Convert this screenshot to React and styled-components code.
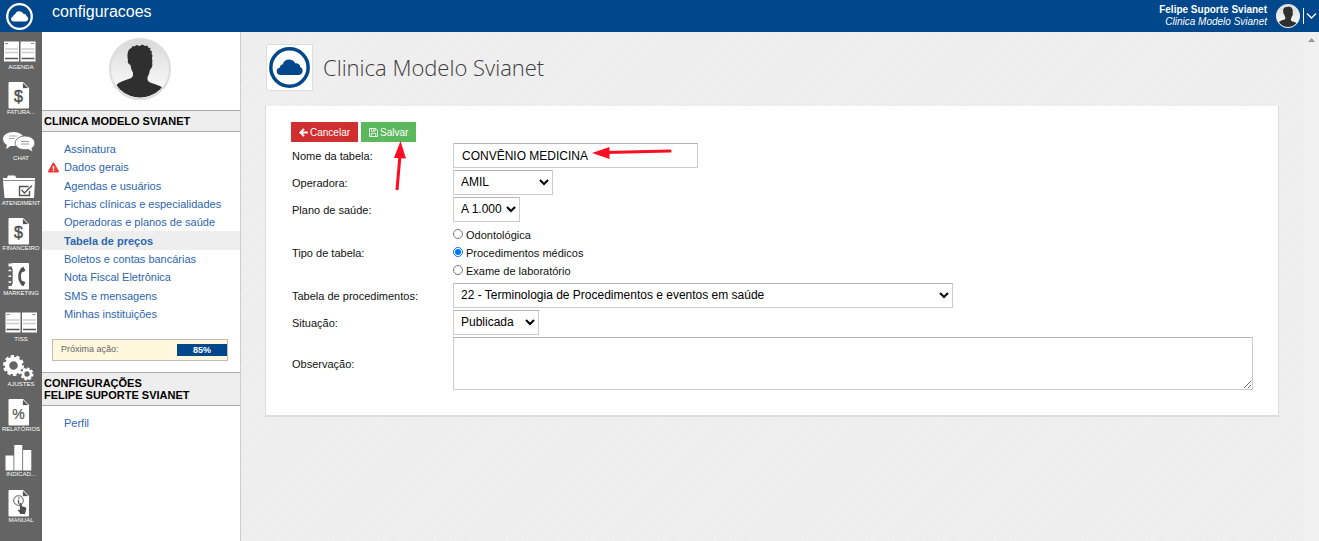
import React, { useState } from "react";
import styled, { createGlobalStyle, css } from "styled-components";
import { FaExclamationTriangle } from "react-icons/fa";

const GlobalStyle = createGlobalStyle`
  * {
    box-sizing: border-box;
  }

  body {
    margin: 0;
    background: #eee;
    color: #111;
    font-family: "Liberation Sans", Arial, sans-serif;
    font-size: 11px;
  }
`;

const Page = styled.div`
  display: flex;
  flex-direction: column;
  min-height: 100vh;
`;

const TopBar = styled.header`
  display: flex;
  align-items: center;
  height: 32px;
  padding: 0 2px 0 6px;
  background: #00478b;
  color: #fff;
`;

const HomeLink = styled.a`
  display: flex;
  width: 46px;
`;

const PageName = styled.h1`
  flex: 1;
  margin: 0;
  padding-bottom: 8px;
  font-size: 16px;
  font-weight: normal;
  line-height: 24px;
`;

const UserInfo = styled.div`
  margin-right: 9px;
  font-size: 10px;
  line-height: 12px;
  text-align: right;
`;

const UserName = styled.div`
  font-weight: bold;
`;

const ClinicName = styled.div`
  font-style: italic;
`;

const UserMenu = styled.button`
  display: flex;
  align-items: center;
  padding: 0;
  border: none;
  background: none;
  cursor: pointer;
`;

const Divider = styled.span`
  width: 1px;
  height: 16px;
  margin: 0 2px 0 3px;
  background: #fff;
`;

const Body = styled.div`
  display: flex;
  flex: 1;
`;

const Rail = styled.nav`
  flex: none;
  width: 42px;
  padding-top: 1px;
  background: #646464;
`;

const RailList = styled.div`
  display: grid;
  grid-auto-rows: 1fr;
  min-height: 498px;
`;

const RailItem = styled.a`
  display: flex;
  flex-direction: column;
  align-items: center;
  color: #fff;
  font-size: 6px;
  line-height: 9px;
  text-decoration: none;
  white-space: nowrap;

  svg {
    flex: none;
  }
`;

const Sidebar = styled.aside`
  flex: none;
  width: 199px;
  border-right: 1px solid #ccc;
  background: #fff;
`;

const AvatarBox = styled.div`
  display: flex;
  justify-content: center;
  padding: 6px 2px 10px 0;
`;

const SectionTitle = styled.h2`
  margin: 0;
  padding: 4px 2px;
  border-top: 1px solid #aaa;
  border-bottom: 1px solid #aaa;
  background: #eee;
  color: #000;
  font-size: 11px;
  line-height: 12px;
`;

const Menu = styled.nav`
  display: grid;
  grid-auto-rows: 1fr;
  min-height: ${(props) => props.$height};
  margin: 8px 0 16px;
`;

const MenuLink = styled.a`
  display: flex;
  align-items: center;
  padding-left: 6px;
  color: #2c66ae;
  text-decoration: none;

  ${(props) =>
    props.$active &&
    css`
      background: #eee;
      font-weight: bold;
    `}
`;

const MenuMark = styled.span`
  display: flex;
  width: 16px;
  color: #f23a35;
`;

const NextAction = styled.div`
  display: flex;
  justify-content: space-between;
  height: 22px;
  margin: 0 12px 11px 10px;
  padding: 4px 0 4px 8px;
  border: 1px solid #bbb;
  background: #fff8df;
  color: #666;
  font-size: 9px;
`;

const Progress = styled.span`
  width: 50px;
  background: #00478b;
  color: #fff;
  font-weight: bold;
  line-height: 13px;
  text-align: center;
`;

const Main = styled.main`
  flex: 1;
  min-width: 0;
  padding: 12px 25px 24px 24px;
  background: repeating-linear-gradient(
    135deg,
    #ededed 0,
    #ededed 2px,
    #f1f1f1 2px,
    #f1f1f1 3px
  );
`;

const ScrollTrack = styled.div`
  flex: none;
  display: flex;
  justify-content: center;
  width: 15px;
  padding-top: 5px;
  background: #f0f0f0;
`;

const Brand = styled.div`
  display: flex;
  align-items: center;
  gap: 10px;
  margin-bottom: 15px;
`;

const BrandLogo = styled.div`
  display: flex;
  margin-left: 1px;
  padding: 2px;
  border: 1px solid #ddd;
  border-radius: 2px;
  background: #fff;
`;

const BrandName = styled.h2`
  margin: 0;
  padding-bottom: 2px;
  color: #3c3c3c;
  font-family: "Open Sans", "Noto Sans", sans-serif;
  font-size: 22px;
  font-weight: 300;
`;

const Card = styled.form`
  padding: 16px 25px 25px;
  border: solid #ddd;
  border-width: 0 1px 2px;
  background: #fff;
`;

const Actions = styled.div`
  display: flex;
  gap: 3px;
  margin-bottom: 1px;
`;

const ActionButton = styled.button`
  display: flex;
  align-items: center;
  justify-content: center;
  gap: 2px;
  height: 20px;
  padding: 0 8px;
  border: none;
  background: ${(props) => (props.$danger ? "#d12f2f" : "#5cb85c")};
  color: #fff;
  font-family: inherit;
  font-size: 10px;
  cursor: pointer;
`;

const Fields = styled.div`
  display: grid;
  grid-template-columns: 160px 1fr;
  gap: 2px;
  align-items: center;
  justify-items: start;
`;

const FieldLabel = styled.label`
  padding: 1px 0 0 1px;
`;

const control = css`
  height: 25px;
  border: 1px solid #ccc;
  border-top-color: #b5b5b5;
  border-radius: 0;
  background: #fff;
  color: #000;
  font-family: inherit;
  font-size: 12px;
`;

const TextInput = styled.input`
  ${control}
  width: 245px;
  padding: 0 8px;
`;

const Select = styled.select`
  ${control}
  width: ${(props) => props.$width};
  max-width: 100%;
  padding: 0 0 2px 3px;
`;

const Notes = styled.textarea`
  ${control}
  display: block;
  width: 100%;
  height: 53px;
`;

const RadioGroup = styled.div`
  padding: 2px 0 1px;
`;

const RadioLabel = styled.label`
  display: flex;
  align-items: center;
  gap: 3px;
  height: 18px;
`;

const Radio = styled.input`
  width: 10px;
  height: 10px;
  margin: 0 0 2px;
`;

const Anchor = styled.div`
  position: relative;
`;

const Pointer = styled.svg`
  position: absolute;
  left: ${(props) => props.$left};
  top: ${(props) => props.$top};
  pointer-events: none;
`;

const Logo = ({ size, ring, fill }) => (
  <svg width={size} height={size} viewBox="0 0 40 40">
    <circle cx="20" cy="20" r="18.2" fill={fill} stroke={ring} strokeWidth="3.4" />
    <path
      fill={ring}
      d="M11.5 27.3C8.8 27.3 7.5 25.5 7.5 23.6c0-2 1.3-3.4 3.2-3.7 0-1.5 1-2.6 2.5-2.8 1-3.1 3.5-4.9 6.4-4.9 2.9 0 5 1.5 6.1 3.8 2.7-.3 4.7 1.3 4.7 3.6 1.5.5 2.4 2 2.4 3.6 0 2.3-1.6 4.1-4 4.1z"
    />
  </svg>
);

const Avatar = ({ size, ring, id }) => (
  <svg width={size} height={size} viewBox="0 0 62 62">
    <defs>
      <linearGradient id={id} x1="0" y1="0" x2="0" y2="1">
        <stop offset="0" stopColor="#d9d9d9" />
        <stop offset="1" stopColor="#fff" />
      </linearGradient>
      <clipPath id={`${id}-clip`}>
        <circle cx="31" cy="31" r="28.5" />
      </clipPath>
    </defs>
    <circle cx="31" cy="31" r="30" fill={`url(#${id})`} stroke={ring} strokeWidth="2" />
    <path
      clipPath={`url(#${id}-clip)`}
      fill="#2f2f2f"
      d="M19 22c-1-4-.5-9 1.500-11l2-1 1-2 2 .5 2-1.500 3 1 3-1.500 2.500 1.500 2.500-.5.5 2 2.500.5-.5 2 2 1.500-.5 2 1 2-.5 3 .5 3-.5 1c1 2 0 6-2 7-.5 3-1 5-2.500 7.500v3c1 2 3 2.800 5.500 3.500 5 1.500 9 3 11.500 5.500l-1 3C50 56.500 42 60 31 60S12 56.500 7 50l1-3.500c2.500-2.500 6.500-4 11.500-5.500 2.500-.7 4-1.500 4.500-3.500v-3c-1.500-2-2-4.500-2.500-7.500-2-1-3.500-2.500-2.500-5z"
    />
  </svg>
);

const ArrowLeftIcon = () => (
  <svg width="9" height="9" viewBox="0 0 9 9">
    <path d="M8.800 4.500H2M5 .9L1.400 4.500L5 8.100" fill="none" stroke="#fff" strokeWidth="1.900" />
  </svg>
);

const SaveIcon = () => (
  <svg width="9" height="9" viewBox="0 0 9 9">
    <path d="M.5.5h6.200l1.800 1.800v6.200h-8z" fill="none" stroke="#fff" strokeWidth=".9" />
    <path d="M2.300.5v2.700h3.900V.5M2.300 8.500V5.300h4.400v3.200M4.900 1v1.700" fill="none" stroke="#fff" strokeWidth=".8" />
  </svg>
);

const Book = () => (
  <>
    <path fill="#fff" d="M4 8.500h15v20H4zM20.500 8.500h15v20h-15z" />
    <path stroke="#888" d="M5 10.500h3M31 10.500h3" />
    <path stroke="#ccc" strokeWidth="1.400" d="M5 16h13M21.500 16h13M5 19.500h13M21.500 19.500h13" />
    <path stroke="#555" strokeWidth="1.400" d="M5 25.500h13M21.500 25.500h13" />
  </>
);

const Sheet = ({ children, sign }) => (
  <>
    <path fill="#fff" d="M9.500 4H23l6 6.500V29.500q0 1-1 1H9.500q-1 0-1-1V5q0-1 1-1z" />
    <path fill="#555" stroke="#fff" strokeWidth=".8" d="M22.500 4v6.500H29z" />
    {sign && (
      <text
        x="18.5"
        y="24"
        textAnchor="middle"
        fill="#505050"
        stroke="#505050"
        strokeWidth={sign === "$" ? 0.5 : 0.2}
        fontSize={sign === "$" ? 16 : 14}
      >
        {sign}
      </text>
    )}
    {children}
  </>
);

const Gear = ({ cx, cy, r, teeth }) => (
  <g fill="none" stroke="#fff">
    <circle cx={cx} cy={cy} r={r * 0.62} strokeWidth={r * 0.42} />
    <circle
      cx={cx}
      cy={cy}
      r={r * 0.88}
      strokeWidth={r * 0.24}
      pathLength={teeth * 2}
      strokeDasharray="1.200 .8"
    />
  </g>
);

const icons = {
  book: <Book />,
  guide: (
    <g transform="translate(1.500 -1)">
      <Book />
    </g>
  ),
  money: <Sheet sign="$" />,
  percent: <Sheet sign="%" />,
  chat: (
    <>
      <path fill="#fff" d="M13.500 8C19.500 8 24 11 24 15s-4.500 7-10.500 7l-3 0L6 25l1-4c-2.500-1.500-4-3.500-4-6 0-4 4.500-7 10.500-7z" />
      <path stroke="#aaa" d="M9 12h8M9 14.500h6" />
      <path
        fill="#fff"
        stroke="#646464"
        strokeWidth=".8"
        d="M25 12c5.500 0 9.800 3 9.800 7 0 2.500-1 4-3 5.200l1.200 4-4.500-2.700-3.500.2c-5.500 0-9.800-2.700-9.800-6.700s4.300-7 9.800-7z"
      />
      <path stroke="#999" d="M21 17.500h8M21 20h8" />
    </>
  ),
  folder: (
    <>
      <path fill="#fff" d="M3 9h4l1-2.500h7L16.500 9H35v2H3zM3 11.800h32l-1 17.200H4.500z" />
      <path fill="none" stroke="#555" strokeWidth="1.400" d="M29.500 22v4.500h-10v-9h9M21.500 21l3 3L32 16.500" />
    </>
  ),
  phone: (
    <>
      <path fill="#fff" d="M12 4h16q1 0 1 1v24.500q0 1-1 1H12zM8.500 4.500h4v3h-4zM8.500 27h4v3h-4z" />
      <path stroke="#fff" strokeWidth="1.600" d="M8.500 11.500h4M8.500 17.300h4M8.500 23h4" />
      <path stroke="#555" strokeWidth="1.300" d="M12 9.400v15.600" />
      <path fill="none" stroke="#505050" strokeWidth="2.600" d="M22.500 10c-4 4-4 11 0 15" />
      <path stroke="#505050" strokeWidth="3.200" d="M22 8.500l2 4M22 26.500l2-4" />
    </>
  ),
  gears: (
    <>
      <Gear cx={13.5} cy={15.5} r={10.5} teeth={10} />
      <Gear cx={27} cy={24} r={6.5} teeth={8} />
    </>
  ),
  bars: <path fill="#fff" d="M5.500 15.500h8v15h-8zM14.300 5h8v25.500h-8zM23.100 10h8.200v20.500h-8.200z" />,
  manual: (
    <Sheet>
      <circle cx="18.500" cy="14.500" r="4.800" fill="none" stroke="#555" />
      <path stroke="#555" strokeWidth="1.300" d="M18.800 11.500v1.300M18.500 13.800v4" />
      <path fill="#505050" d="M19.500 17q1-.8 1.600.2l1 3 3.400 1q1 .5.700 2L25 28h-4.500l-2.800-4q0-1 2.300 0z" />
    </Sheet>
  ),
};

const railItems = [
  ["AGENDA", "book"],
  ["FATURA...", "money"],
  ["CHAT", "chat"],
  ["ATENDIMENT", "folder"],
  ["FINANCEIRO", "money"],
  ["MARKETING", "phone"],
  ["TISS", "guide"],
  ["AJUSTES", "gears"],
  ["RELATÓRIOS", "percent"],
  ["INDICAD...", "bars"],
  ["MANUAL", "manual"],
];

const menuItems = [
  "Assinatura",
  "Dados gerais",
  "Agendas e usuários",
  "Fichas clínicas e especialidades",
  "Operadoras e planos de saúde",
  "Tabela de preços",
  "Boletos e contas bancárias",
  "Nota Fiscal Eletrônica",
  "SMS e mensagens",
  "Minhas instituições",
];

const tableTypes = ["Odontológica", "Procedimentos médicos", "Exame de laboratório"];

const App = () => {
  const [name, setName] = useState("CONVÊNIO MEDICINA");
  const [tableType, setTableType] = useState("Procedimentos médicos");

  return (
    <Page>
      <GlobalStyle />
      <TopBar>
        <HomeLink href="#" aria-label="Svianet">
          <Logo size={27} ring="#fff" fill="none" />
        </HomeLink>
        <PageName>configuracoes</PageName>
        <UserInfo>
          <UserName>Felipe Suporte Svianet</UserName>
          <ClinicName>Clinica Modelo Svianet</ClinicName>
        </UserInfo>
        <UserMenu type="button" aria-label="Menu do usuário">
          <Avatar size={24} ring="#fff" id="user" />
          <Divider />
          <svg width="11" height="8" viewBox="0 0 11 8">
            <path d="M1 1.500l4.500 4.500L10 1.500" fill="none" stroke="#fff" strokeWidth="1.300" />
          </svg>
        </UserMenu>
      </TopBar>

      <Body>
        <Rail>
          <RailList>
            {railItems.map(([label, icon]) => (
              <RailItem href="#" key={label}>
                <svg width="42" height="30" viewBox="0 0 42 30" overflow="visible">
                  {icons[icon]}
                </svg>
                {label}
              </RailItem>
            ))}
          </RailList>
        </Rail>

        <Sidebar>
          <AvatarBox>
            <Avatar size={62} ring="#ddd" id="clinic" />
          </AvatarBox>
          <SectionTitle>CLINICA MODELO SVIANET</SectionTitle>
          <Menu $height="183px">
            {menuItems.map((item) => (
              <MenuLink href="#" key={item} $active={item === "Tabela de preços"}>
                <MenuMark>
                  {item === "Dados gerais" && <FaExclamationTriangle size={11} />}
                </MenuMark>
                {item}
              </MenuLink>
            ))}
          </Menu>
          <NextAction>
            Próxima ação:
            <Progress>85%</Progress>
          </NextAction>
          <SectionTitle>
            CONFIGURAÇÕES
            <br />
            FELIPE SUPORTE SVIANET
          </SectionTitle>
          <Menu $height="18px">
            <MenuLink href="#">
              <MenuMark />
              Perfil
            </MenuLink>
          </Menu>
        </Sidebar>

        <Main>
          <Brand>
            <BrandLogo>
              <Logo size={41} ring="#00478b" fill="#fff" />
            </BrandLogo>
            <BrandName>Clinica Modelo Svianet</BrandName>
          </Brand>

          <Card onSubmit={(e) => e.preventDefault()}>
            <Actions>
              <ActionButton type="button" $danger>
                <ArrowLeftIcon />
                Cancelar
              </ActionButton>
              <Anchor>
                <ActionButton type="submit">
                  <SaveIcon />
                  Salvar
                </ActionButton>
                <Pointer $left="31px" $top="19px" width="14" height="50" viewBox="0 0 14 50">
                  <path d="M8 14L5 49" stroke="#fb0d22" strokeWidth="3" />
                  <path d="M8.500 0L14 17.500L2 17z" fill="#fb0d22" />
                </Pointer>
              </Anchor>
            </Actions>

            <Fields>
              <FieldLabel htmlFor="nome">Nome da tabela:</FieldLabel>
              <Anchor>
                <TextInput id="nome" value={name} onChange={(e) => setName(e.target.value)} />
                <Pointer $left="139px" $top="3px" width="80" height="14" viewBox="0 0 80 14">
                  <path d="M14 6.500L78 5" stroke="#fb0d22" strokeWidth="3" strokeLinecap="round" />
                  <path d="M0 7L17.500 1v12z" fill="#fb0d22" />
                </Pointer>
              </Anchor>

              <FieldLabel htmlFor="operadora">Operadora:</FieldLabel>
              <Select id="operadora" $width="100px">
                <option>AMIL</option>
              </Select>

              <FieldLabel htmlFor="plano">Plano de saúde:</FieldLabel>
              <Select id="plano" $width="67px">
                <option>A 1.000</option>
              </Select>

              <FieldLabel as="span" id="tipo">Tipo de tabela:</FieldLabel>
              <RadioGroup role="radiogroup" aria-labelledby="tipo">
                {tableTypes.map((type) => (
                  <RadioLabel key={type}>
                    <Radio
                      type="radio"
                      name="tipo"
                      checked={tableType === type}
                      onChange={() => setTableType(type)}
                    />
                    {type}
                  </RadioLabel>
                ))}
              </RadioGroup>

              <FieldLabel htmlFor="procedimentos">Tabela de procedimentos:</FieldLabel>
              <Select id="procedimentos" $width="500px">
                <option>22 - Terminologia de Procedimentos e eventos em saúde</option>
              </Select>

              <FieldLabel htmlFor="situacao">Situação:</FieldLabel>
              <Select id="situacao" $width="86px">
                <option>Publicada</option>
              </Select>

              <FieldLabel htmlFor="observacao">Observação:</FieldLabel>
              <Notes id="observacao" />
            </Fields>
          </Card>
        </Main>

        <ScrollTrack>
          <svg width="7" height="5" viewBox="0 0 7 5">
            <path d="M0 5L3.500 1L7 5z" fill="#999" />
          </svg>
        </ScrollTrack>
      </Body>
    </Page>
  );
};

export default App;
